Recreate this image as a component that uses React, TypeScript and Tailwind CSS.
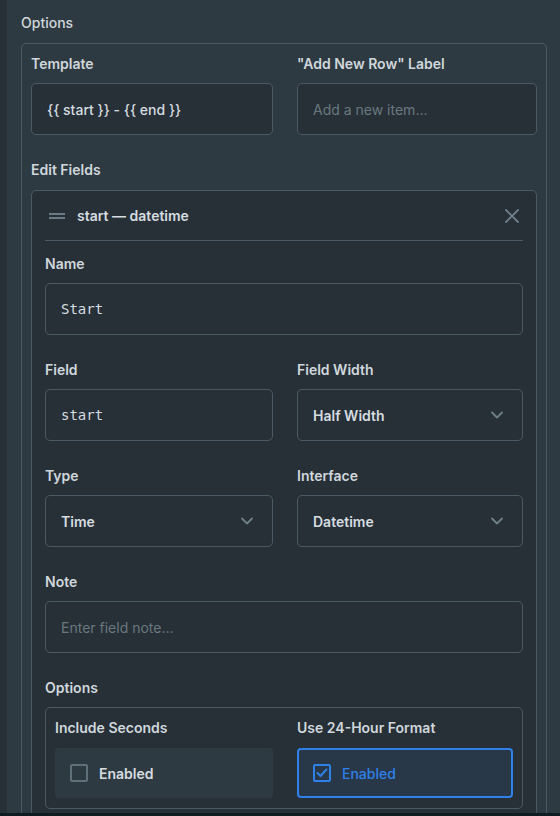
import React from 'react';

const font = { fontFamily: 'Inter, "Noto Sans", sans-serif' };

const Label = ({ children }: { children: React.ReactNode }) => (
  <div className="text-[14px] leading-5 font-semibold text-[#d0d7dc] mb-[9px]">{children}</div>
);

const Chevron = () => (
  <svg width="12" height="8" viewBox="0 0 12 8" fill="none">
    <path d="M1 1.5 6 6.5 11 1.5" stroke="#6e7f8a" strokeWidth="1.8" strokeLinecap="round" strokeLinejoin="round" />
  </svg>
);

const Input = ({ value, placeholder, mono }: { value?: string; placeholder?: string; mono?: boolean }) => (
  <div className="h-[52px] flex items-center pl-[15px] bg-[#273037] border border-[#4a5a64] rounded-[5px]">
    {value ? (
      <span
        className={mono ? 'text-[14px] text-[#d6dce0]' : 'text-[14px] font-medium text-[#d6dce0]'}
        style={mono ? { fontFamily: '"DejaVu Sans Mono", monospace' } : undefined}
      >
        {value}
      </span>
    ) : (
      <span className="text-[14px] text-[#69787f]">{placeholder}</span>
    )}
  </div>
);

const Select = ({ value }: { value: string }) => (
  <div className="h-[52px] flex items-center justify-between pl-[15px] pr-[19px] bg-[#273037] border border-[#4a5a64] rounded-[5px]">
    <span className="text-[14px] font-semibold text-[#d6dce0]">{value}</span>
    <Chevron />
  </div>
);

const Field = ({ label, children }: { label: string; children: React.ReactNode }) => (
  <div>
    <Label>{label}</Label>
    {children}
  </div>
);

export default function App() {
  return (
    <div className="w-[560px] h-[816px] flex flex-col overflow-hidden bg-[#0f1d22]" style={font}>
      <div className="flex-1 flex overflow-hidden">
        <div className="w-[7px] bg-[#263036]" />
        <div className="flex-1 bg-[#2e3a41] pl-[14px] pr-[13px] pt-[13px]">
          <div className="text-[14px] leading-5 font-medium text-[#d0d7dc] mb-[10px]">Options</div>

          {/* Options group */}
          <div className="border border-[#4a5a64] rounded-[5px] px-[9px] pt-[10px] h-[1000px]">
            <div className="grid grid-cols-[242px_1fr] gap-x-[24px]">
              <Field label="Template">
                <Input value="{{ start }} - {{ end }}" />
              </Field>
              <Field label={'"Add New Row" Label'}>
                <Input placeholder="Add a new item..." />
              </Field>
            </div>

            <div className="mt-[25px] text-[14px] leading-5 font-semibold text-[#d0d7dc] mb-[10px]">Edit Fields</div>

            {/* Field card */}
            <div className="bg-[#273037] border border-[#4a5a64] rounded-[5px] px-[13px] h-[800px]">
              <div className="h-[50px] flex items-center border-b border-[#4a5a64]">
                <div className="ml-[4px] w-[16px] flex flex-col gap-[2px]">
                  <div className="h-[2px] bg-[#6b7b86]" />
                  <div className="h-[2px] bg-[#6b7b86]" />
                </div>
                <span className="ml-[12px] text-[14px] font-semibold text-[#d6dce0]">start — datetime</span>
                <svg className="ml-auto mr-[4px]" width="14" height="14" viewBox="0 0 14 14" fill="none">
                  <path d="M1 1 13 13M13 1 1 13" stroke="#6e7f8a" strokeWidth="1.8" strokeLinecap="round" />
                </svg>
              </div>

              <div className="mt-[13px]">
                <Field label="Name">
                  <Input value="Start" mono />
                </Field>
              </div>

              <div className="mt-[25px] grid grid-cols-[228px_1fr] gap-x-[24px] gap-y-[25px]">
                <Field label="Field">
                  <Input value="start" mono />
                </Field>
                <Field label="Field Width">
                  <Select value="Half Width" />
                </Field>
                <Field label="Type">
                  <Select value="Time" />
                </Field>
                <Field label="Interface">
                  <Select value="Datetime" />
                </Field>
              </div>

              <div className="mt-[25px]">
                <Field label="Note">
                  <Input placeholder="Enter field note..." />
                </Field>
              </div>

              <div className="mt-[25px]">
                <Label>Options</Label>
                <div className="border border-[#4a5a64] rounded-[5px] px-[9px] pt-[10px] pb-[10px] grid grid-cols-[218px_1fr] gap-x-[24px]">
                  <div>
                    <div className="text-[14px] leading-5 font-semibold text-[#d0d7dc] mb-[10px]">Include Seconds</div>
                    <div className="h-[50px] flex items-center pl-[15px] bg-[#2e3a41] rounded-[4px]">
                      <div className="w-[18px] h-[18px] border-2 border-[#5f707b] rounded-[2px]" />
                      <span className="ml-[11px] text-[14px] font-semibold text-[#d6dce0]">Enabled</span>
                    </div>
                  </div>
                  <div>
                    <div className="text-[14px] leading-5 font-semibold text-[#d0d7dc] mb-[10px]">Use 24-Hour Format</div>
                    <div className="h-[50px] flex items-center pl-[14px] bg-[#283848] border-2 border-[#2f80e8] rounded-[4px]">
                      <div className="w-[18px] h-[18px] border-2 border-[#2f80e8] rounded-[2px] flex items-center justify-center">
                        <svg width="12" height="10" viewBox="0 0 12 10" fill="none">
                          <path d="M1.5 5 4.5 8 10.5 1.5" stroke="#2f80e8" strokeWidth="2" strokeLinecap="round" strokeLinejoin="round" />
                        </svg>
                      </div>
                      <span className="ml-[11px] text-[14px] font-medium text-[#2f80e8]">Enabled</span>
                    </div>
                  </div>
                </div>
              </div>
            </div>
          </div>
        </div>
      </div>
      <div className="h-[3px] bg-[#0f1d22]" />
    </div>
  );
}
